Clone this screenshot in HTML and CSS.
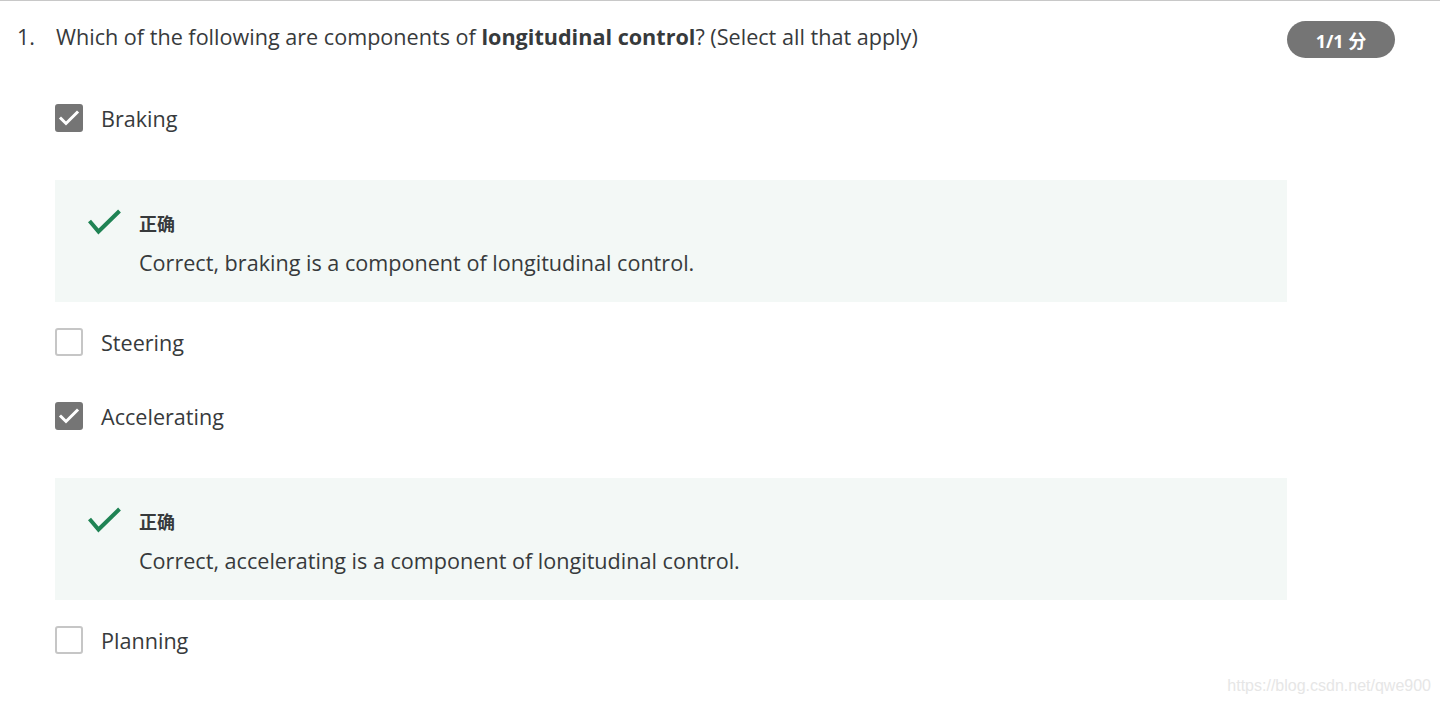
FILE: index.html
```html
<!DOCTYPE html>
<html lang="zh-CN">
<head>
  <meta charset="UTF-8">
  <title>Quiz</title>
  <link rel="stylesheet" href="styles.css">
</head>
<body>
  <div class="question">
    <!-- Question header -->
    <div class="question-header">
      <div class="q-num">1.</div>
      <div class="q-text">Which of the following are components of <strong>longitudinal control</strong>? (Select all that apply)</div>
      <div class="score">1/1 分</div>
    </div>

    <!-- Options -->
    <div class="options">
      <div class="option">
        <span class="checkbox checked">
          <svg width="24" height="24" viewBox="0 0 24 24" fill="none" stroke="#fff" stroke-width="3" stroke-linecap="square">
            <path d="M4 12.5l5 5 11-11"></path>
          </svg>
        </span>
        <span class="option-label">Braking</span>
      </div>
      <div class="feedback">
        <svg class="feedback-icon" width="34" height="26" viewBox="0 0 34 26" fill="none" stroke="#1f8354" stroke-width="4">
          <path d="M1.5 12l9 10.5 21-20.5"></path>
        </svg>
        <div class="feedback-body">
          <div class="feedback-title">正确</div>
          <div class="feedback-text">Correct, braking is a component of longitudinal control.</div>
        </div>
      </div>

      <div class="option">
        <span class="checkbox"></span>
        <span class="option-label">Steering</span>
      </div>

      <div class="option">
        <span class="checkbox checked">
          <svg width="24" height="24" viewBox="0 0 24 24" fill="none" stroke="#fff" stroke-width="3" stroke-linecap="square">
            <path d="M4 12.5l5 5 11-11"></path>
          </svg>
        </span>
        <span class="option-label">Accelerating</span>
      </div>
      <div class="feedback">
        <svg class="feedback-icon" width="34" height="26" viewBox="0 0 34 26" fill="none" stroke="#1f8354" stroke-width="4">
          <path d="M1.5 12l9 10.5 21-20.5"></path>
        </svg>
        <div class="feedback-body">
          <div class="feedback-title">正确</div>
          <div class="feedback-text">Correct, accelerating is a component of longitudinal control.</div>
        </div>
      </div>

      <div class="option">
        <span class="checkbox"></span>
        <span class="option-label">Planning</span>
      </div>
    </div>
  </div>

  <div class="watermark">https://blog.csdn.net/qwe900</div>
</body>
</html>
```

FILE: styles.css
```css
* {
  margin: 0;
  padding: 0;
  box-sizing: border-box;
}

body {
  background-color: #fff;
  font-family: 'Open Sans', 'Noto Sans CJK SC', sans-serif;
  color: #373a3c;
  height: 703px;
  overflow: hidden;
}

.question {
  border-top: 1px solid #c8c8c8;
  padding: 20px 45px 0 17px;
}

.question-header {
  display: flex;
  align-items: flex-start;
}

.q-num {
  width: 39px;
  font-size: 21.6px;
  line-height: 28px;
  padding-top: 2px;
}

.q-text {
  flex: 1;
  font-size: 21.6px;
  line-height: 28px;
  padding-top: 2px;
}

.q-text strong {
  font-weight: 700;
}

.score {
  width: 108px;
  height: 37px;
  border-radius: 19px;
  background-color: #757575;
  color: #fff;
  font-size: 18px;
  font-weight: 700;
  display: flex;
  align-items: center;
  justify-content: center;
}

.options {
  display: flex;
  flex-direction: column;
  margin-left: 38px;
  width: 1232px;
  margin-top: 36px;
}

.option {
  display: flex;
  align-items: center;
  height: 48px;
  margin-bottom: 26px;
}

.checkbox {
  width: 28px;
  height: 28px;
  border: 2px solid #c6c6c6;
  border-radius: 3px;
  display: flex;
  align-items: center;
  justify-content: center;
}

.checkbox.checked {
  background-color: #757575;
  border-color: #757575;
}

.option-label {
  margin-left: 18px;
  font-size: 21.6px;
}

.feedback {
  display: flex;
  align-items: flex-start;
  background-color: #f3f8f6;
  height: 122px;
  padding: 32px 0 0 33px;
  margin: 12px 0 16px;
}

.feedback-icon {
  margin-top: -3px;
}

.feedback-body {
  margin-left: 17px;
}

.feedback-title {
  font-size: 18px;
  font-weight: 700;
  line-height: 24px;
}

.feedback-text {
  margin-top: 13px;
  font-size: 21.6px;
  line-height: 28px;
}

.watermark {
  position: absolute;
  right: 9px;
  bottom: 8px;
  font-family: 'Liberation Sans', Arial, sans-serif;
  font-size: 16px;
  color: #e6e6e6;
}
```
